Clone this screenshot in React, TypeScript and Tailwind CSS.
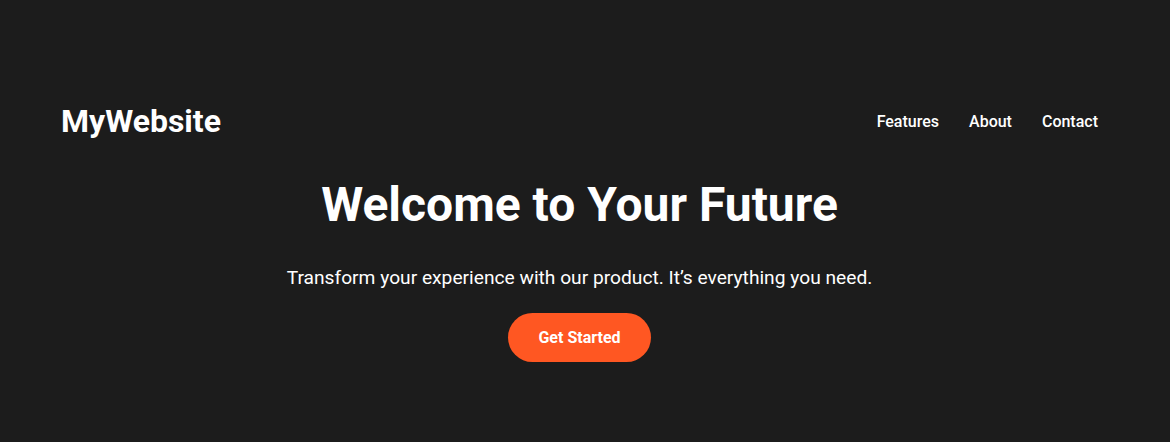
export default function App() {
  return (
    <div className="min-h-[442px] w-full bg-[#1c1c1c] text-white" style={{ fontFamily: 'Roboto, "Noto Sans", sans-serif' }}>
      <header className="flex items-center justify-between pt-[102px] pl-[61px] pr-[72px]">
        <div className="text-[32px] font-bold leading-[38px]">MyWebsite</div>
        <nav className="mt-[2px] flex items-center gap-[30px] text-[16px] font-medium">
          <a href="#" className="text-white">Features</a>
          <a href="#" className="text-white">About</a>
          <a href="#" className="text-white">Contact</a>
        </nav>
      </header>
      <section className="flex flex-col items-center text-center mt-[37px] pr-[11px]">
        <h1 className="text-[48px] font-bold leading-[56px]">Welcome to Your Future</h1>
        <p className="mt-[34px] text-[19.2px] leading-[22px]">Transform your experience with our product. It’s everything you need.</p>
        <button className="mt-[24px] rounded-full bg-[#ff5722] px-[30px] py-[15px] text-[16px] font-bold leading-[19px] text-white">Get Started</button>
      </section>
    </div>
  );
}
